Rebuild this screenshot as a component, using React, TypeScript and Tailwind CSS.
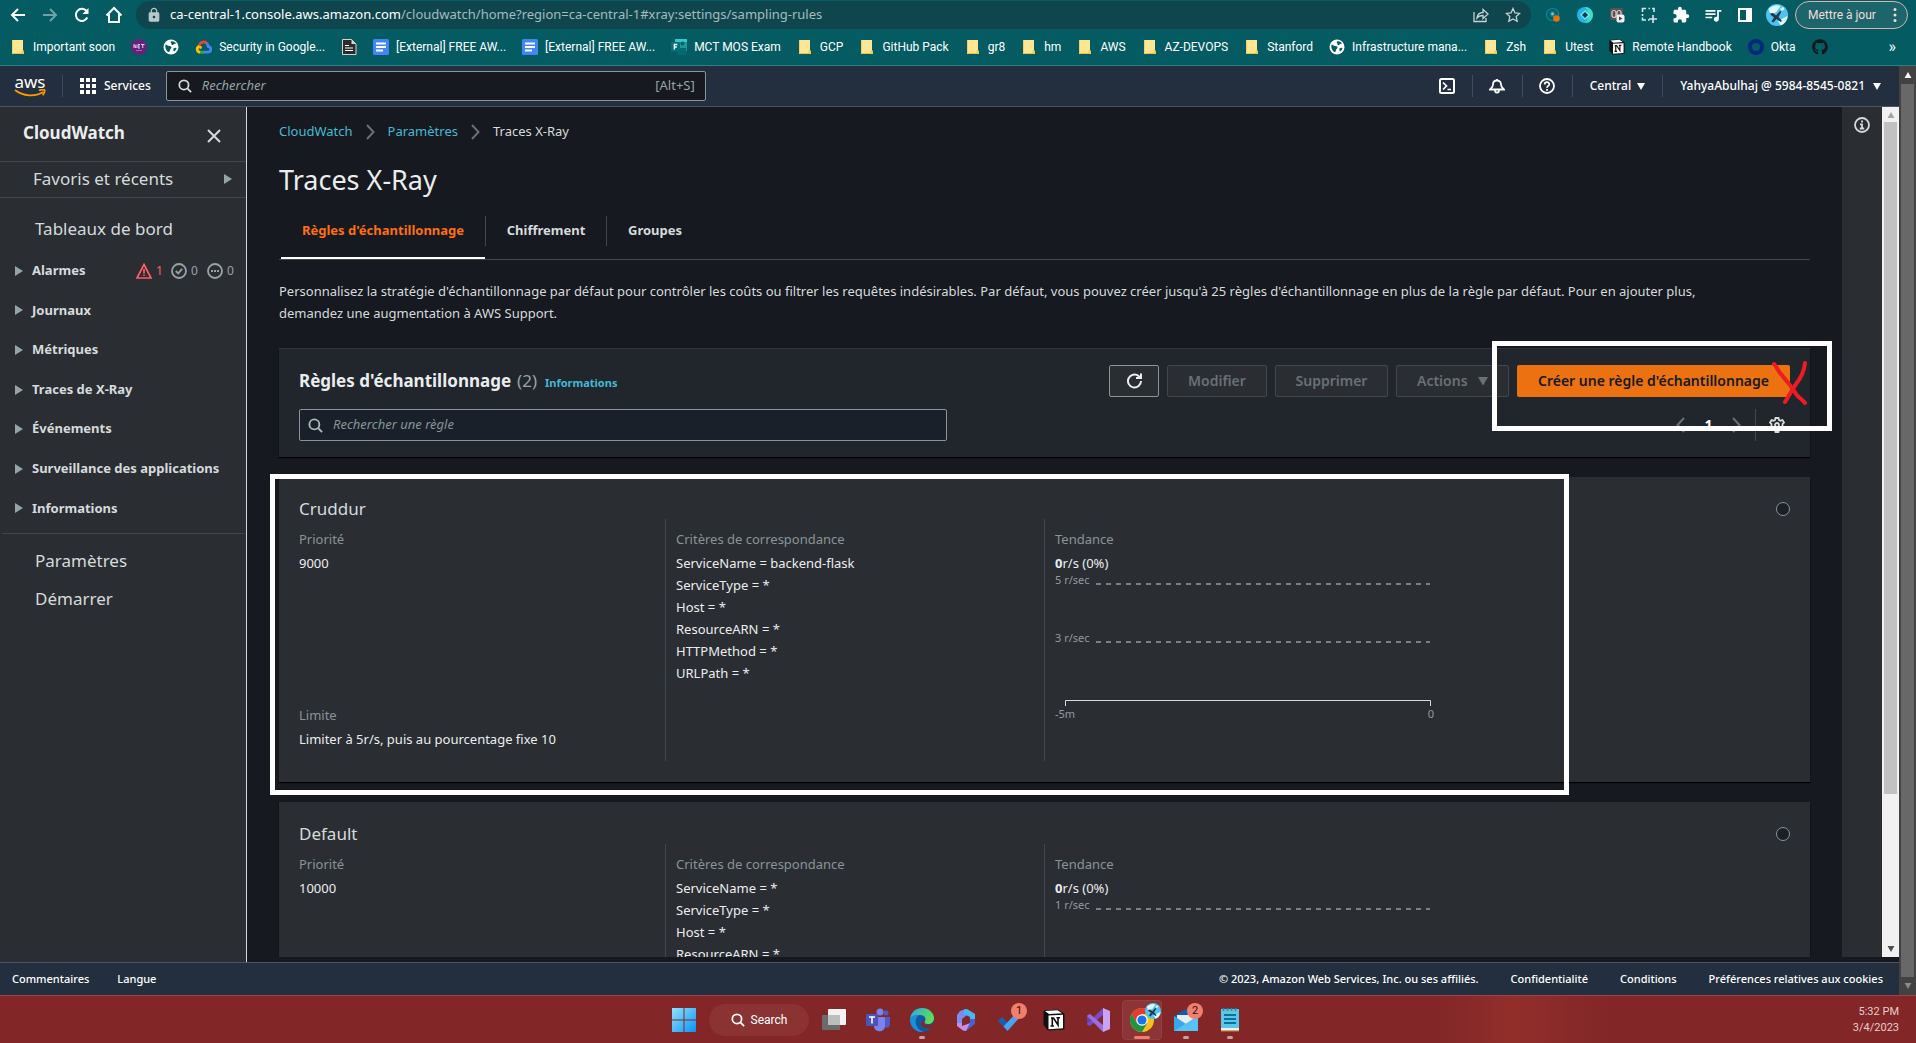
import React from "react";
import type { ReactNode } from "react";
import { FaGithub } from "react-icons/fa";
import { MdExtension, MdQueueMusic, MdLock } from "react-icons/md";

type IconProps = { className?: string };

/* ---------- browser icons ---------- */

const BackIcon = () => (
  <svg viewBox="0 0 16 16" className="size-4" fill="none" stroke="currentColor" strokeWidth="2">
    <path d="M15 8H2.500M8 2 2 8l6 6" />
  </svg>
);
const ForwardIcon = () => (
  <svg viewBox="0 0 16 16" className="size-4" fill="none" stroke="currentColor" strokeWidth="2">
    <path d="M1 8h12.500M8 2l6 6-6 6" />
  </svg>
);
const ReloadIcon = () => (
  <svg viewBox="0 0 16 16" className="size-4" fill="none" stroke="currentColor" strokeWidth="2">
    <path d="M13.300 10.500A6 6 0 1 1 12.500 4" />
    <path d="M14.500 1v6h-6z" fill="currentColor" stroke="none" />
  </svg>
);
const RefreshIcon = () => (
  <svg viewBox="0 0 16 16" className="size-4" fill="none" stroke="currentColor" strokeWidth="2">
    <path d="M15 8a6.500 6.500 0 1 1-2.500-5.100L14.500 5" />
    <path d="M10 5h5V.5" />
  </svg>
);
const HomeIcon = () => (
  <svg viewBox="0 0 18 18" className="size-[18px]" fill="none" stroke="currentColor" strokeWidth="2">
    <path d="M1.500 9.500 9 2l7.500 7.500M4 8v8h10V8" />
  </svg>
);
const ShareIcon = () => (
  <svg viewBox="0 0 16 16" className="size-4" fill="none" stroke="currentColor" strokeWidth="1.300">
    <path d="M1 5v9.500h12V11" />
    <path d="M4 11c.5-4 3-5.500 6-5.500V2.500L15 7l-5 4.500V8.500C7.500 8.500 5.500 9 4 11z" />
  </svg>
);
const StarIcon = () => (
  <svg viewBox="0 0 16 16" className="size-4" fill="none" stroke="currentColor" strokeWidth="1.300">
    <path d="m8 1.500 2 4.400 4.700.5-3.500 3.200 1 4.700L8 11.900l-4.200 2.400 1-4.700L1.300 6.400 6 5.900z" />
  </svg>
);
const EyeExtIcon = () => (
  <svg viewBox="0 0 16 16" className="size-4">
    <circle cx="7.500" cy="7.500" r="6" fill="none" stroke="#0c8a96" strokeWidth="1.200" />
    <circle cx="7.500" cy="7" r="3.200" fill="#1a6f86" />
    <circle cx="7.500" cy="7" r="1.400" fill="#7fc9d2" />
    <circle cx="11.500" cy="11.500" r="3.300" fill="#e8710a" />
  </svg>
);
const RingExtIcon = () => (
  <svg viewBox="0 0 16 16" className="size-4">
    <circle cx="8" cy="8" r="8" fill="#1fb6e8" />
    <path d="M8 0a8 8 0 0 1 0 16c4-3 4-13 0-16z" fill="#3be0c0" />
    <path d="m8 4 4 4-4 4-4-4z" fill="#0b3d4a" stroke="#7fe9f5" strokeWidth="1.200" />
  </svg>
);
const MaskExtIcon = () => (
  <svg viewBox="0 0 16 16" className="size-4">
    <rect x="1" y="1" width="13" height="12" rx="2" fill="#5b5350" />
    <rect x="3" y="3.500" width="4" height="7" rx="2" fill="none" stroke="#d8d2ce" strokeWidth="1.200" />
    <rect x="8" y="3.500" width="4" height="7" rx="2" fill="none" stroke="#d8d2ce" strokeWidth="1.200" />
    <rect x="7.500" y="7.500" width="8" height="8" rx="2" fill="#f1f1f1" />
    <path d="M10 9.500v4l3.500-2z" fill="#444" />
  </svg>
);
const SelectExtIcon = () => (
  <svg viewBox="0 0 16 16" className="size-4" fill="none" stroke="#d9e6e7" strokeWidth="1.600">
    <path d="M1.500 5V1.500H5M7.500 1.500H9M11 1.500h2V5M1.500 7v2M1.500 10.500V13H5M7 13h1.500M12 8v8M8 12h8" />
  </svg>
);
const SidePanelIcon = () => (
  <svg viewBox="0 0 16 16" className="size-4">
    <path d="M1 1h14v14H1zM3 3v10h6V3z" fill="#fff" fillRule="evenodd" />
  </svg>
);
const Avatar = ({ className }: IconProps) => (
  <svg viewBox="0 0 22 22" className={className}>
    <circle cx="11" cy="11" r="11" fill="#4cc4f2" />
    <path d="M2.500 5c4-4 9-4.500 12-3l-4 6-6 3zM12 17l9.500-5c0 4-3 8.500-7 9.500z" fill="#dff6ff" />
    <path d="m4 9.500 3-.5 3 2.500L14 7l1.500.5-3 5.500 3.500 4-1.200 1-4.300-3-3 3.500-2-1L8 13.500l-3.500-2.700z" fill="#24384a" />
    <path d="m14 5 3-2 1.500 2-2.500 2z" fill="#f3f7fa" />
  </svg>
);

/* ---------- bookmark icons ---------- */

const Folder = () => (
  <svg viewBox="0 0 16 16" className="size-4">
    <path d="M2 1h11v11l1 .5V15H2z" fill="#ffe694" />
    <path d="M2 14h12v1H2z" fill="#e9bf45" />
    <path d="M11.500 11.500h2.500V15h-2.500z" fill="#f3c84b" />
    <path d="M2 1h1v14H2z" fill="#f1cf61" />
  </svg>
);
const NetIcon = () => (
  <svg viewBox="0 0 16 16" className="size-4">
    <circle cx="8" cy="8" r="8" fill="#68217a" />
    <path d="M3 9V5.500L5 9V5.500M9 5.500H7V9h2M7 7.200h1.700M10 5.500h3.500M11.800 5.500V9" fill="none" stroke="#e7cdec" strokeWidth="1" />
    <path d="M5 11.500h6" stroke="#a269af" strokeWidth="1" />
  </svg>
);
const GlobeIcon = () => (
  <svg viewBox="0 0 16 16" className="size-4">
    <circle cx="8" cy="8" r="7.500" fill="#fff" />
    <path d="M2.500 5.500c1.500 0 2 1.500 3.500 1.500s2.500.5 2.500 1.500S7 10 7 11.500 5.500 13 5 13C3 11.500 1.800 8.500 2.500 5.500zM8 2.500c1.500-.5 4 .5 5 2-1 .5-1.500 0-2.500 1s-2 .5-2-.5S7 3.500 8 2.500zM10.500 9.500c1-1 2-1 3-.5-.3 1.500-1.200 2.800-2.200 3.500-.8-.5-1.300-2-.8-3z" fill="#045b62" />
  </svg>
);
const GCloudIcon = () => (
  <svg viewBox="0 0 18 16" className="h-4 w-[17px]" fill="none" strokeWidth="3">
    <path d="M4.500 6a5 5 0 0 1 8.500-1.500" stroke="#ea4335" />
    <path d="M12.500 4c1.500 1.500 1 3 1.500 3.500a3 3 0 0 1-.5 6H9" stroke="#4285f4" />
    <path d="M9.500 13.500H5" stroke="#34a853" />
    <path d="M5.500 13.500A3.200 3.200 0 0 1 4 7.500l3 1.500" stroke="#fbbc05" />
  </svg>
);
const DocFileIcon = () => (
  <svg viewBox="0 0 16 16" className="size-4">
    <path d="M1.500.5h9L15 5v10.500H1.500z" fill="#2b2b2b" stroke="#d9d4cf" />
    <path d="M10.500.5V5H15" fill="#d9d4cf" />
    <path d="M4 6.500h4M4 9h8M4 11.500h8" stroke="#fff" strokeWidth="1.200" />
  </svg>
);
const GDocIcon = () => (
  <svg viewBox="0 0 16 16" className="size-4">
    <rect width="16" height="16" rx="1.500" fill="#4285f4" />
    <path d="M3 4.500h10M3 8h10M3 11.500h7" stroke="#fff" strokeWidth="1.800" />
  </svg>
);
const FormsIcon = () => (
  <svg viewBox="0 0 16 16" className="size-4">
    <path d="M4 0h12v9l-3 2V7H4z" fill="#37c6d0" />
    <path d="M9 3h7v9H9z" fill="#1a9ba1" />
    <path d="M5 9h10v7H7z" fill="#036c70" />
    <rect y="3" width="9" height="9.500" rx="1" fill="#037178" />
    <path d="M3.300 10.500v-5h3M3.300 8h2.500" fill="none" stroke="#fff" strokeWidth="1.300" />
    <circle cx="11.500" cy="4.500" r="2" fill="#0b5a60" />
  </svg>
);
const NotionIcon = ({ className = "size-4" }: IconProps) => (
  <svg viewBox="0 0 22 22" className={className}>
    <path d="m1 2 14-1 6 4v15l-16 1-4-5z" fill="#111" stroke="#111" strokeLinejoin="round" />
    <path d="m2 2 12.500-.8 4.500 3L6 5z" fill="#fff" />
    <path d="M5.500 6.500 20 5.700v13.600l-14.500.9z" fill="#fff" />
    <path d="M8 9h2.500l4.500 7V9.500M9.300 17V9M7.500 17h3.500M13.500 8.800h3.500" fill="none" stroke="#111" strokeWidth="1.600" />
  </svg>
);
const OktaIcon = () => (
  <svg viewBox="0 0 16 16" className="size-4">
    <circle cx="8" cy="8" r="6" fill="none" stroke="#00297a" strokeWidth="4" />
  </svg>
);
const GithubIcon = () => <FaGithub className="size-4 text-[#14181c]" />;

/* ---------- console icons ---------- */

const SearchIcon = ({ className = "size-4" }: IconProps) => (
  <svg viewBox="0 0 16 16" className={className} fill="none" stroke="currentColor" strokeWidth="2">
    <circle cx="6.800" cy="6.800" r="5.300" />
    <path d="m10.700 10.700 4.300 4.300" />
  </svg>
);
const CaretDown = ({ className = "w-2" }: IconProps) => (
  <svg viewBox="0 0 8 7" className={className} fill="currentColor">
    <path d="M0 0h8L4 7z" />
  </svg>
);
const CaretRight = () => (
  <svg viewBox="0 0 8 10" className="h-2.5 w-2 shrink-0 text-[#95a5a6]" fill="currentColor">
    <path d="M0 0v10l8-5z" />
  </svg>
);
const Chevron = ({ className = "" }: IconProps) => (
  <svg viewBox="0 0 9 16" className={className + " h-4 w-[9px]"} fill="none" stroke="currentColor" strokeWidth="2">
    <path d="m1 1 6.500 7L1 15" />
  </svg>
);
const Gear = () => (
  <svg viewBox="0 0 16 16" className="size-4 text-[#d5dbdb]" fill="none" stroke="currentColor" strokeWidth="1.800">
    <path d="M6.500 1h3l.5 2 1.500.7 2-.7 1.500 2.500L13.500 7v2l1.500 1.500-1.500 2.500-2-.6-1.500.7-.5 1.900h-3L6 13.100l-1.500-.7-2 .6L1 10.500 2.500 9V7L1 5.500 2.500 3l2 .7L6 3z" />
    <circle cx="8" cy="8" r="2" />
  </svg>
);
const AwsLogo = () => (
  <a href="#home" aria-label="AWS" className="flex w-8 flex-col items-center text-white">
    <span className="h-[13px] text-[17px] leading-[11px]">aws</span>
    <svg viewBox="0 0 32 8" className="h-2 w-8" fill="none" stroke="#f90" strokeWidth="1.800">
      <path d="M1 1c8 6.500 20 7 28 2" />
      <path d="M25 1.500c2-.8 4.500-1 5.500-.4.400 1-.4 3.400-1.800 5.100" />
    </svg>
  </a>
);

/* ---------- browser chrome ---------- */

type Bookmark = { icon: () => ReactNode; label?: string; name?: string };
const bookmarks: Bookmark[] = [
  { icon: Folder, label: "Important soon" },
  { icon: NetIcon, name: ".NET" },
  { icon: GlobeIcon, name: "Web" },
  { icon: GCloudIcon, label: "Security in Google..." },
  { icon: DocFileIcon, name: "Document" },
  { icon: GDocIcon, label: "[External] FREE AW..." },
  { icon: GDocIcon, label: "[External] FREE AW..." },
  { icon: FormsIcon, label: "MCT MOS Exam" },
  { icon: Folder, label: "GCP" },
  { icon: Folder, label: "GitHub Pack" },
  { icon: Folder, label: "gr8" },
  { icon: Folder, label: "hm" },
  { icon: Folder, label: "AWS" },
  { icon: Folder, label: "AZ-DEVOPS" },
  { icon: Folder, label: "Stanford" },
  { icon: GlobeIcon, label: "Infrastructure mana..." },
  { icon: Folder, label: "Zsh" },
  { icon: Folder, label: "Utest" },
  { icon: () => <NotionIcon />, label: "Remote Handbook" },
  { icon: OktaIcon, label: "Okta" },
  { icon: GithubIcon, name: "GitHub" },
];

const extensions: { icon: ReactNode; name: string }[] = [
  { icon: <EyeExtIcon />, name: "Extension 1" },
  { icon: <RingExtIcon />, name: "Extension 2" },
  { icon: <MaskExtIcon />, name: "Extension 3" },
  { icon: <SelectExtIcon />, name: "Capture" },
  { icon: <MdExtension className="size-[18px]" />, name: "Extensions" },
  { icon: <MdQueueMusic className="size-5" />, name: "Media" },
  { icon: <SidePanelIcon />, name: "Side panel" },
  { icon: <Avatar className="size-[22px]" />, name: "Profile" },
];

function BrowserChrome() {
  return (
    <header className="border-b border-[#2c7f84] bg-[#045b62] text-white">
      <div className="flex h-[29px] items-center pt-px">
        <div className="flex w-[136px] items-center pl-0.5">
          <button aria-label="Back" className="grid w-8 place-items-center"><BackIcon /></button>
          <button aria-label="Forward" className="grid w-8 place-items-center text-[#6fa1a5]"><ForwardIcon /></button>
          <button aria-label="Reload" className="grid w-8 place-items-center"><ReloadIcon /></button>
          <button aria-label="Home" className="grid w-8 place-items-center"><HomeIcon /></button>
        </div>
        <div className="flex h-7 min-w-0 flex-1 items-center rounded-full bg-[#0f464d] pr-2.5 pl-2.5 text-[13px]">
          <MdLock className="size-4 text-[#b8c8ca]" />
          <p className="ml-2 flex-1 truncate text-[#a3bcbf]">
            <span className="text-white">ca-central-1.console.aws.amazon.com</span>
            /cloudwatch/home?region=ca-central-1#xray:settings/sampling-rules
          </p>
          <div className="flex gap-4 text-[#c3d2d3]">
            <button aria-label="Share"><ShareIcon /></button>
            <button aria-label="Bookmark"><StarIcon /></button>
          </div>
        </div>
        <div className="flex items-center pl-1.5">
          {extensions.map((e) => (
            <button key={e.name} aria-label={e.name} className="grid w-8 place-items-center">{e.icon}</button>
          ))}
        </div>
        <button className="mr-2 ml-0.5 flex h-7 w-[113px] items-center justify-between rounded-full border border-[#d3b5b0] bg-[#1c656b] pr-2.5 pl-3 font-[Roboto] text-xs whitespace-nowrap text-[#f3dcd8]">
          Mettre à jour
          <svg viewBox="0 0 4 16" className="h-4 w-1" fill="currentColor">
            <circle cx="2" cy="2.500" r="1.500" /><circle cx="2" cy="8" r="1.500" /><circle cx="2" cy="13.500" r="1.500" />
          </svg>
        </button>
      </div>
      <nav className="flex h-9 items-center gap-4 pr-5 pl-2.5 font-[Roboto] text-xs">
        {bookmarks.map((b, i) => (
          <a key={i} href="#bookmark" aria-label={b.label ?? b.name} className="flex items-center gap-[7px] whitespace-nowrap">
            <b.icon />
            {b.label && <span>{b.label}</span>}
          </a>
        ))}
        <button aria-label="More bookmarks" className="ml-auto text-base">»</button>
      </nav>
    </header>
  );
}

/* ---------- console top navigation ---------- */

const NavDivider = () => <span className="h-[22px] w-px bg-[#414d5c]" />;

function TopNav() {
  return (
    <div className="flex h-[41px] items-center border-b border-[#4a5464] bg-[#232f3e] text-white">
      <div className="flex items-center pl-3.5">
        <AwsLogo />
        <span className="w-4" />
        <NavDivider />
        <button className="ml-[17px] flex items-center gap-2 text-xs font-medium">
          <svg viewBox="0 0 16 16" className="size-4" fill="currentColor">
            {[0, 6, 12].map((y) => [0, 6, 12].map((x) => <rect key={x + "-" + y} x={x} y={y} width="4" height="4" />))}
          </svg>
          Services
        </button>
      </div>
      <label className="ml-[15px] flex h-[30px] w-[540px] items-center rounded-xs border border-[#879596] bg-[#16191f] pr-2.5 pl-[11px]">
        <SearchIcon className="size-3.5 text-[#d5dbdb]" />
        <input aria-label="Rechercher" placeholder="Rechercher" className="ml-2.5 min-w-0 flex-1 bg-transparent text-[13px] italic outline-none placeholder:text-[#95a5a6]" />
        <span className="text-[13px] text-[#95a5a6]">[Alt+S]</span>
      </label>
      <div className="ml-auto flex items-center text-xs font-medium whitespace-nowrap">
        <button aria-label="CloudShell" className="grid w-[49px] place-items-center">
          <svg viewBox="0 0 16 16" className="size-4" fill="none" stroke="currentColor" strokeWidth="2">
            <rect x="1" y="1" width="14" height="14" rx="1.500" />
            <path d="m4 4.500 3.500 3.500L4 11.500M8.500 11.500H12" strokeWidth="1.700" />
          </svg>
        </button>
        <NavDivider />
        <button aria-label="Notifications" className="grid w-[49px] place-items-center">
          <svg viewBox="0 0 16 16" className="size-4" fill="none" stroke="currentColor" strokeWidth="1.800">
            <path d="M8 1v1.500M8 2.500c-3 0-4 2-4 4C4 9 2.500 10 1 11.500h14C13.500 10 12 9 12 6.500c0-2-1-4-4-4zM6 12c0 3.500 4 3.500 4 0" />
          </svg>
        </button>
        <NavDivider />
        <button aria-label="Aide" className="grid w-[49px] place-items-center">
          <svg viewBox="0 0 16 16" className="size-4" fill="none" stroke="currentColor" strokeWidth="1.800">
            <circle cx="8" cy="8" r="7" />
            <path d="M5.700 6.500c0-3 4.600-3 4.600-.3C10.300 8 8 7.800 8 9.800M8 11v1.700" />
          </svg>
        </button>
        <NavDivider />
        <button className="flex items-center gap-1.5 px-[17px]">
          Central <CaretDown />
        </button>
        <NavDivider />
        <button className="flex items-center gap-2 pr-[18px] pl-[17px]">
          YahyaAbulhaj @ 5984-8545-0821 <CaretDown />
        </button>
      </div>
    </div>
  );
}

/* ---------- side bar ---------- */

const sections = [
  "Alarmes",
  "Journaux",
  "Métriques",
  "Traces de X-Ray",
  "Événements",
  "Surveillance des applications",
  "Informations",
];

function AlarmCounts() {
  return (
    <span className="ml-auto flex items-center pr-[11px] text-xs font-normal text-[#95a5a6]">
      <svg viewBox="0 0 16 16" className="size-4 text-[#ff5d64]" fill="none" stroke="currentColor" strokeWidth="1.700">
        <path d="M8 1.500 15 15H1zM8 6v4.500M8 11.500v1.500" />
      </svg>
      <span className="w-[19px] pl-1 text-[#ff5d64]">1</span>
      <svg viewBox="0 0 16 16" className="size-4" fill="none" stroke="currentColor" strokeWidth="1.800">
        <circle cx="8" cy="8" r="7" /><path d="m4.800 8 2.400 2.400 4-4.500" />
      </svg>
      <span className="w-5 pl-1">0</span>
      <svg viewBox="0 0 16 16" className="size-4" fill="none" stroke="currentColor" strokeWidth="1.800">
        <circle cx="8" cy="8" r="7" /><path d="M4 8h2M7 8h2M10 8h2" />
      </svg>
      <span className="w-3 pl-1">0</span>
    </span>
  );
}

function SideBar() {
  return (
    <aside className="w-[247px] shrink-0 border-r border-[#d5dbdb] bg-[#2a2e33] text-[#d5dbdb]">
      <div className="flex h-[55px] items-center justify-between border-b border-[#414750] pr-[25px] pb-0.5 pl-[23px]">
        <h2 className="text-[17px] leading-6 font-bold text-[#eaeded]">CloudWatch</h2>
        <button aria-label="Fermer" className="pt-1.5">
          <svg viewBox="0 0 14 14" className="size-3.5" fill="none" stroke="currentColor" strokeWidth="2">
            <path d="m1 1 12 12M13 1 1 13" />
          </svg>
        </button>
      </div>
      <button className="flex h-9 w-full items-center justify-between border-b border-[#414750] pr-3.5 pb-0.5 pl-[33px] text-[17px]">
        Favoris et récents <CaretRight />
      </button>
      <a href="#dashboards" className="mt-[18px] mb-[9px] block pl-[35px] text-[17px] leading-[26px]">Tableaux de bord</a>
      <ul className="flex h-[277px] flex-col">
        {sections.map((s) => (
          <li key={s} className="flex min-h-0 flex-1 items-center pl-[15px] text-[13px] font-bold">
            <button className="flex items-center gap-[9px] whitespace-nowrap"><CaretRight /> {s}</button>
            {s === "Alarmes" && <AlarmCounts />}
          </li>
        ))}
      </ul>
      <hr className="mx-0.5 mt-[5px] border-[#414750]" />
      <a href="#settings" className="mt-[14px] block pl-[35px] text-[17px] leading-[26px]">Paramètres</a>
      <a href="#start" className="mt-3 block pl-[35px] text-[17px] leading-[26px]">Démarrer</a>
    </aside>
  );
}

/* ---------- main content ---------- */

const disabledButton = "h-8 rounded-xs border border-[#414750] bg-[#2a2e33] text-sm font-semibold text-[#687078]";

function RulesHeader() {
  return (
    <section className="relative mt-6 flex flex-col gap-3 border-t border-[#30353c] bg-[#21252c] px-5 pt-4 pb-4 shadow-[0_1px_1px_#000]">
      <div className="flex h-8 items-center gap-2">
        <h2 className="flex items-baseline gap-1.5 text-[17px] font-bold whitespace-nowrap text-[#eaeded]">
          Règles d'échantillonnage <span className="font-normal text-[#95a5a6]">(2)</span>
          <a href="#info" className="ml-0.5 text-[11px] font-bold text-[#44b9d6]">Informations</a>
        </h2>
        <button aria-label="Actualiser" className="ml-auto grid h-8 w-[50px] place-items-center rounded-xs border border-[#879596] bg-[#2a2e33] text-[#eaeded]">
          <RefreshIcon />
        </button>
        <button className={disabledButton + " w-[100px]"}>Modifier</button>
        <button className={disabledButton + " w-[113px]"}>Supprimer</button>
        <button className={disabledButton + " flex w-[113px] items-center gap-2.5 pl-5"}>
          Actions <CaretDown className="w-2.5" />
        </button>
        <button className="h-8 w-[273px] rounded-xs bg-[#ec7211] text-sm font-semibold whitespace-nowrap text-[#16191f]">
          Créer une règle d'échantillonnage
        </button>
      </div>
      <div className="flex h-8 items-center">
        <label className="flex h-8 w-[648px] items-center rounded-xs border border-[#879596] bg-[#1a2029] px-2">
          <SearchIcon className="size-[15px] text-[#aab7b8]" />
          <input aria-label="Rechercher une règle" placeholder="Rechercher une règle" className="ml-2.5 min-w-0 flex-1 bg-transparent text-[13px] italic outline-none placeholder:text-[#879596]" />
        </label>
        <div className="ml-auto flex h-8 items-center text-sm text-[#687078]">
          <button aria-label="Page précédente"><Chevron className="rotate-180" /></button>
          <button className="w-[47px] text-center font-bold text-white">1</button>
          <button aria-label="Page suivante"><Chevron /></button>
          <span className="ml-3.5 h-full w-px bg-[#414750]" />
          <button aria-label="Préférences" className="mr-[5px] ml-[13px]"><Gear /></button>
        </div>
      </div>
      <div className="pointer-events-none absolute -top-2 -right-[22px] h-[90px] w-[340px] border-[5px] border-white" />
      <svg viewBox="0 0 36 44" className="pointer-events-none absolute top-3 right-0.5 h-11 w-9" fill="none" stroke="#ed1c24" strokeWidth="4" strokeLinecap="round">
        <path d="M2 3c3 3 4 7 7 10 6 8 12 14 15 20 3 4 6 5 9 9" />
        <path d="M33 2c-1 9-4 15-9 21-5 7-7 12-11 18" />
      </svg>
    </section>
  );
}

type Rule = { name: string; priority: string; limit?: string; service: string; ticks: string[] };

const rules: Rule[] = [
  { name: "Cruddur", priority: "9000", limit: "Limiter à 5r/s, puis au pourcentage fixe 10", service: "backend-flask", ticks: ["5 r/sec", "3 r/sec"] },
  { name: "Default", priority: "10000", service: "*", ticks: ["1 r/sec"] },
];

const TrendChart = ({ ticks, axis }: { ticks: string[]; axis: boolean }) => (
  <svg viewBox="0 0 384 148" className="h-[148px] w-96 overflow-visible" fill="#95999c" fontSize="11">
    {ticks.map((t, i) => (
      <g key={t}>
        <text x="0" y={10 + i * 58}>{t}</text>
        <path d={`M41 ${10 + i * 58}H375`} stroke="#7a8083" strokeWidth="2" strokeDasharray="5 5" />
      </g>
    ))}
    {axis && (
      <g>
        <path d="M10.500 132v-5.500h365v5.500" fill="none" stroke="#d5dbdb" />
        <text x="0" y="144">-5m</text>
        <text x="376" y="144" textAnchor="middle">0</text>
      </g>
    )}
  </svg>
);

const Label = ({ children }: { children: ReactNode }) => <dt className="mb-0.5 text-[#879596]">{children}</dt>;

function RuleCard({ rule, marked }: { rule: Rule; marked?: boolean }) {
  const criteria = [
    ["ServiceName", rule.service],
    ["ServiceType", "*"],
    ["Host", "*"],
    ["ResourceARN", "*"],
  ];
  if (marked) criteria.push(["HTTPMethod", "*"], ["URLPath", "*"]);
  return (
    <article className="relative mt-5 bg-[#2a2e33] px-5 pt-[22px] pb-[21px] text-[13px] leading-[22px] text-[#eaeded] shadow-[0_1px_1px_#000]">
      <div className="flex h-5 items-center justify-between">
        <h3 className="text-[17px] leading-5 text-[#d5dbdb]">{rule.name}</h3>
        <input type="radio" name="rule" aria-label={rule.name} className="size-3.5 appearance-none rounded-full border border-[#879596] bg-[#1a2029]" />
      </div>
      <dl className="grid min-h-[242px] grid-cols-[367fr_379fr_745fr]">
        <div className="border-r border-[#414750] pt-[9px]">
          <Label>Priorité</Label>
          <dd>{rule.priority}</dd>
          {rule.limit && (
            <div className="mt-[130px]">
              <Label>Limite</Label>
              <dd>{rule.limit}</dd>
            </div>
          )}
        </div>
        <div className="border-r border-[#414750] pt-[9px] pl-2.5">
          <Label>Critères de correspondance</Label>
          {criteria.map(([k, v]) => (
            <dd key={k}>{k} = {v}</dd>
          ))}
        </div>
        <div className="pt-[9px] pl-2.5">
          <Label>Tendance</Label>
          <dd><b>0</b>r/s (0%)</dd>
          <dd><TrendChart ticks={rule.ticks} axis={!!rule.limit} /></dd>
        </div>
      </dl>
      {marked && (
        <div className="pointer-events-none absolute -top-[3px] right-[241px] -bottom-[13px] -left-[9px] border-[5px] border-white" />
      )}
    </article>
  );
}

function Main() {
  return (
    <main className="min-w-0 flex-1 overflow-hidden px-8 text-[13px] text-[#d5dbdb]">
      <nav className="mt-3.5 flex h-[22px] items-center gap-[13px]">
        <a href="#cloudwatch" className="text-[#44b9d6]">CloudWatch</a>
        <Chevron className="text-[#687078]" />
        <a href="#settings" className="text-[#44b9d6]">Paramètres</a>
        <Chevron className="text-[#687078]" />
        <span>Traces X-Ray</span>
      </nav>
      <h1 className="mt-[19px] text-[27px] leading-9 text-[#eaeded]">Traces X-Ray</h1>
      <div role="tablist" className="mt-[18px] flex h-11 border-b border-[#414750] font-bold">
        <button role="tab" aria-selected="true" className="relative ml-0.5 flex h-[43px] w-[204px] justify-center pt-[5px] text-[#ff6f0f]">
          Règles d'échantillonnage
          <span className="absolute inset-x-0 bottom-0 h-0.5 bg-white" />
        </button>
        <button role="tab" aria-selected="false" className="h-[30px] w-[122px] border-x border-[#414750]">Chiffrement</button>
        <button role="tab" aria-selected="false" className="h-[30px] pl-[21px]">Groupes</button>
      </div>
      <p className="mt-5 leading-[22px]">
        Personnalisez la stratégie d'échantillonnage par défaut pour contrôler les coûts ou filtrer les requêtes indésirables. Par défaut, vous pouvez créer jusqu'à 25 règles d'échantillonnage en plus de la règle par défaut. Pour en ajouter plus,
        <br />
        demandez une augmentation à AWS Support.
      </p>
      <RulesHeader />
      <RuleCard rule={rules[0]} marked />
      <RuleCard rule={rules[1]} />
    </main>
  );
}

/* ---------- footer and task bar ---------- */

function Footer() {
  return (
    <footer className="flex h-[33px] items-center justify-between border-t border-[#4a5464] bg-[#232f3e] pr-4 pl-3 text-[11px] font-medium whitespace-nowrap text-white">
      <div className="flex gap-7">
        <button>Commentaires</button>
        <button>Langue</button>
      </div>
      <div className="flex gap-8">
        <span>© 2023, Amazon Web Services, Inc. ou ses affiliés.</span>
        <a href="#privacy">Confidentialité</a>
        <a href="#terms">Conditions</a>
        <button>Préférences relatives aux cookies</button>
      </div>
    </footer>
  );
}

const WindowsIcon = () => (
  <svg viewBox="0 0 24 24" className="size-6">
    <defs>
      <linearGradient id="win" x1="0" y1="0" x2="1" y2="1">
        <stop offset="0" stopColor="#8fe3ff" /><stop offset="1" stopColor="#0a93f5" />
      </linearGradient>
    </defs>
    <path d="M0 0h11.500v11.500H0zM12.500 0H24v11.500H12.500zM0 12.500h11.500V24H0zM12.500 12.500H24V24H12.500z" fill="url(#win)" />
  </svg>
);
const TaskViewIcon = () => (
  <svg viewBox="0 0 24 24" className="size-6">
    <rect y="7" width="18" height="15" rx="1" fill="#6b6b6b" />
    <rect x="6" y="1" width="18" height="16" rx="1" fill="#f3f3f3" />
    <path d="M6 7h12v10H6z" fill="#bdbdbd" />
  </svg>
);
const TeamsIcon = () => (
  <svg viewBox="0 0 24 24" className="size-6">
    <circle cx="20" cy="5" r="2.500" fill="#5059c9" />
    <circle cx="14" cy="4" r="3.500" fill="#7b83eb" />
    <path d="M16 9h8v7c0 4-5 5-6 2z" fill="#5059c9" />
    <path d="M8 9h11v9c0 7-11 7-11 0z" fill="#7b83eb" />
    <rect y="6" width="12" height="12" rx="1" fill="#4b53bc" />
    <path d="M3 9h6M6 9v6.500" stroke="#fff" strokeWidth="1.600" />
  </svg>
);
const EdgeIcon = () => (
  <svg viewBox="0 0 24 24" className="size-6">
    <defs>
      <linearGradient id="edgeA" x1="0" y1="0" x2="1" y2=".4">
        <stop offset="0" stopColor="#2aa8e8" /><stop offset="1" stopColor="#5fdc5a" />
      </linearGradient>
    </defs>
    <circle cx="12" cy="12" r="12" fill="#0c59a4" />
    <path d="M0 11C1 4 6 0 12 0c7 0 12 5 12 10 0 4-3 6-6 6-3.500 0-4-1.500-3-3 1.500-3-1-6-5-6-5 0-9 3-10 4z" fill="url(#edgeA)" />
    <path d="M0 11c1-3 5-5 9-4-3 2-4 6-3 9 1 4 4 7 8 8C6 25 0 19 0 11z" fill="#1b8fd8" />
    <path d="M14.500 14c-1 1.500.5 3 3.500 3 2 0 4-1 5-2v4c-3 2-11 2-12-3 0-2 1.500-4 3-4z" fill="#822627" />
  </svg>
);
const M365Icon = () => (
  <svg viewBox="0 0 24 24" className="size-6">
    <path d="M12 1 6 3 3 7v9l5 2v-7l5-4z" fill="#7a8cf0" />
    <path d="m10 1.500 3-.5 8 5v9l-5-1V9l-6-3z" fill="#48b9f0" />
    <path d="M21 11v5l-9 7-4-2 8-6v-4z" fill="#4a5fd0" />
    <path d="m3 15 5 0 0 3 5-2 3-1-4 8-3-.5L3 18z" fill="#c58fe8" />
    <path d="m12 9 3.500 2v4L12 16.500 9 15v-4z" fill="#822627" />
  </svg>
);
const TodoIcon = () => (
  <svg viewBox="0 0 24 24" className="size-6">
    <path d="m0 13 4-4 7 7-4 4z" fill="#1b5fb4" />
    <path d="m5.500 18.500 4 4.500L23 8l-4-4z" fill="#4aa3f0" />
  </svg>
);
const VSIcon = () => (
  <svg viewBox="0 0 24 24" className="size-6">
    <path d="M1 7v10l3 1V6z" fill="#6a3fb5" />
    <path d="M4 18 17 7V0L1 16z" fill="#7a4bc4" />
    <path d="m4 6 13 11v7L1 8z" fill="#9a6ee0" />
    <path d="M17 0v24l7-3V3z" fill="#c9a4f5" />
  </svg>
);
const ChromeIcon = () => (
  <svg viewBox="0 0 24 24" className="size-6">
    <circle cx="12" cy="12" r="12" fill="#fbc116" />
    <path d="M1.600 6A12 12 0 0 1 22.400 6H12L6.800 15z" fill="#e33b2e" />
    <path d="M1.600 6A12 12 0 0 0 12 24l5.200-9H6.800z" fill="#229342" />
    <circle cx="12" cy="12" r="5.800" fill="#fff" />
    <circle cx="12" cy="12" r="4.600" fill="#1a73e8" />
  </svg>
);
const MailIcon = () => (
  <svg viewBox="0 0 24 24" className="size-6">
    <path d="m0 8 12-7 12 7v15H0z" fill="#0f5fae" />
    <path d="M3 7h18v9H3z" fill="#e8eef4" />
    <path d="m0 8 12 8 12-8v15H0z" fill="#35a8ea" />
    <path d="M0 23 24 8v15z" fill="#56c2f7" />
  </svg>
);
const NotepadIcon = () => (
  <svg viewBox="0 0 24 24" className="size-6">
    <path d="M3 1h18v21H3z" fill="#58c8e8" />
    <path d="M3 20h18v3H3z" fill="#f1f1f1" />
    <path d="M3 22.500h18V24H3z" fill="#a3591b" />
    <path d="M6 7h12M6 11h12M6 15h12" stroke="#0f6f96" strokeWidth="1.800" />
    <path d="M5.500 0v3M9.500 0v3M13.500 0v3M17.500 0v3" stroke="#1e8fb8" strokeWidth="1.600" />
  </svg>
);

type TaskApp = { name: string; icon: ReactNode; badge?: string; running?: boolean; active?: boolean };
const apps: TaskApp[] = [
  { name: "Task view", icon: <TaskViewIcon /> },
  { name: "Teams", icon: <TeamsIcon /> },
  { name: "Edge", icon: <EdgeIcon />, running: true },
  { name: "Microsoft 365", icon: <M365Icon /> },
  { name: "To Do", icon: <TodoIcon />, badge: "1" },
  { name: "Notion", icon: <NotionIcon className="size-[22px]" /> },
  { name: "Visual Studio", icon: <VSIcon /> },
  { name: "Chrome", icon: <ChromeIcon />, active: true },
  { name: "Mail", icon: <MailIcon />, badge: "2", running: true },
  { name: "Notepad", icon: <NotepadIcon />, running: true },
];

function TaskBar() {
  return (
    <div className="relative flex h-12 items-center justify-center border-t border-[#98484a] bg-[#822627] bg-[linear-gradient(90deg,transparent_75%,#912e2a_79%,transparent_84%)] pr-0.5 font-[Roboto]">
      <button aria-label="Start" className="grid h-[46px] w-11 place-items-center"><WindowsIcon /></button>
      <button className="mx-[3px] flex h-8 w-[100px] items-center justify-center gap-1.5 rounded-full bg-[#8b3232] text-xs text-white">
        <SearchIcon className="size-3.5" /> Search
      </button>
      {apps.map((a) => (
        <button key={a.name} aria-label={a.name} className="relative grid h-[46px] w-11 place-items-center">
          {a.active && <span className="absolute inset-x-0.5 inset-y-[3px] rounded-sm border border-[#914142] bg-[#8b3536]" />}
          <span className="relative">{a.icon}</span>
          {a.active && <Avatar className="absolute top-1.5 right-[3px] size-4" />}
          {a.badge && (
            <span className="absolute top-1.5 right-[5px] grid size-4 place-items-center rounded-full bg-[#f27f6b] text-[11px] leading-4 text-[#2a1010]">{a.badge}</span>
          )}
          {a.running && <span className="absolute bottom-1 h-[3px] w-1.5 rounded-full bg-[#cf9c9d]" />}
          {a.active && <span className="absolute bottom-1 h-[3px] w-4 rounded-full bg-[#f27f6b]" />}
        </button>
      ))}
      <div className="absolute right-[17px] text-right text-[11px] leading-4 text-[#e8cccc]">
        <p>5:32 PM</p>
        <p>3/4/2023</p>
      </div>
    </div>
  );
}

export default function App() {
  return (
    <div className="flex h-screen flex-col overflow-hidden bg-[#16191f] font-['Noto_Sans',sans-serif]">
      <BrowserChrome />
      <div className="flex min-h-0 flex-1">
        <div className="flex min-w-0 flex-1 flex-col">
          <TopNav />
          <div className="flex min-h-0 flex-1">
            <SideBar />
            <div className="mb-[5px] flex min-w-0 flex-1">
              <Main />
              <div className="flex w-10 shrink-0 justify-center bg-[#2a2e33] pt-2.5 text-[#d5dbdb]">
                <button aria-label="Informations" className="h-4">
                  <svg viewBox="0 0 16 16" className="size-4" fill="none" stroke="currentColor" strokeWidth="1.800">
                    <circle cx="8" cy="8" r="7" />
                    <path d="M8 3.500v2M6 7.300h2v4M5.800 11.500h4.400" />
                  </svg>
                </button>
              </div>
              <div className="flex w-[17px] shrink-0 flex-col items-center justify-between bg-[#f1f1f1] py-[5px]">
                <CaretDown className="h-1.5 w-2 shrink-0 rotate-180 text-[#a3a3a3]" />
                <span className="mt-1 h-[672px] w-[13px] bg-[#c1c1c1]" />
                <CaretDown className="mt-auto h-1.5 w-2 shrink-0 text-[#505050]" />
              </div>
            </div>
          </div>
          <Footer />
        </div>
        <div className="flex w-[17px] shrink-0 flex-col items-center gap-1.5 bg-[#424242] py-1.5">
          <CaretDown className="h-1.5 w-2 shrink-0 rotate-180 text-white" />
          <span className="w-[13px] flex-1 bg-[#686868]" />
          <CaretDown className="h-1.5 w-2 shrink-0 text-[#8a8a8a]" />
        </div>
      </div>
      <TaskBar />
    </div>
  );
}
